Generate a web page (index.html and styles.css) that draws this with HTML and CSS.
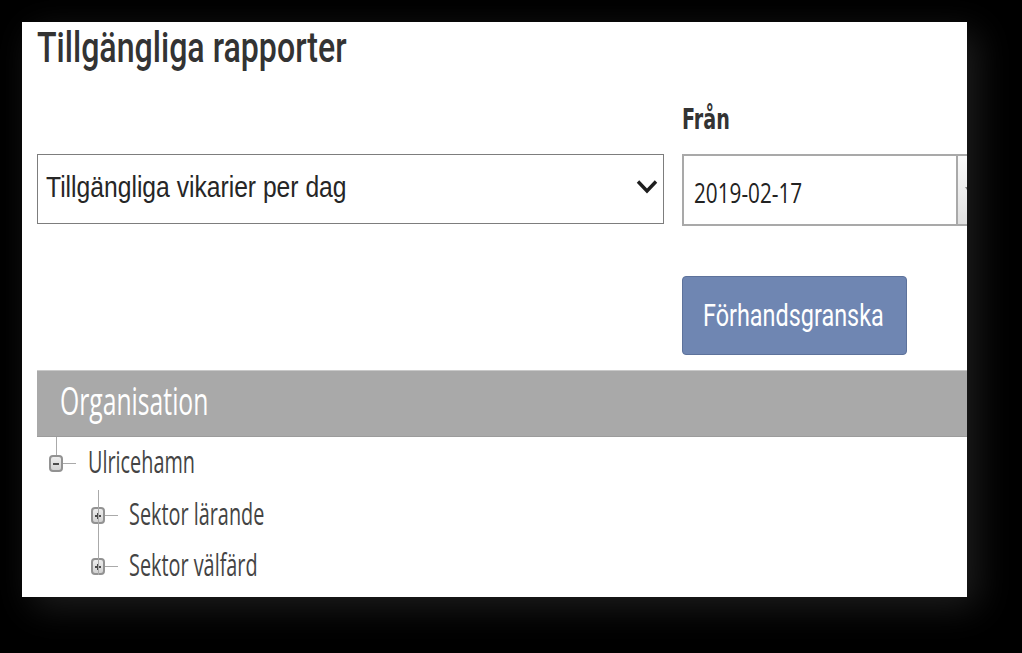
FILE: index.html
```html
<!DOCTYPE html>
<html lang="sv">
<head>
<meta charset="utf-8">
<title>Tillgängliga rapporter</title>
<link rel="stylesheet" href="styles.css">
</head>
<body>
<div class="card">
  <h1 class="title"><span class="sq sq-title">Tillgängliga rapporter</span></h1>
  <div class="form">
    <div class="cell"></div>
    <label class="label"><span class="sq sq-label">Från</span></label>
    <div class="select">
      <span class="sq sq-select">Tillgängliga vikarier per dag</span>
      <svg class="chev" width="22" height="15" viewBox="0 0 22 15"><path d="M2 2.5 L11 12 L20 2.5" fill="none" stroke="#1e1e1e" stroke-width="3.4"/></svg>
    </div>
    <div class="date">
      <div class="date-field"><span class="sq sq-date">2019-02-17</span></div>
      <div class="date-btn"><svg class="arrow" width="8" height="6" viewBox="0 0 8 6"><path d="M0 0 H8 L4 6 Z" fill="#888"/></svg></div>
    </div>
    <div class="cell"></div>
    <div class="cell"><button class="btn"><span class="sq sq-btn">Förhandsgranska</span></button></div>
  </div>
  <div class="bar"><span class="sq sq-bar">Organisation</span></div>
  <div class="tree">
    <div class="stub"></div>
    <div class="row root-row">
      <svg class="toggle" width="14" height="17" viewBox="0 0 14 17"><defs><linearGradient id="g1" x1="0" y1="0" x2="0" y2="1"><stop offset="0" stop-color="#efefef"/><stop offset="1" stop-color="#cfcfcf"/></linearGradient></defs><rect x="1" y="1" width="12" height="15" rx="3" fill="url(#g1)" stroke="#929292" stroke-width="2"/><rect class="sign" x="4" y="8" width="6" height="2" fill="#4a4a4a"/></svg>
      <span class="hline"></span>
      <span class="sq sq-tree">Ulricehamn</span>
    </div>
    <div class="children">
      <div class="child">
        <div class="row">
          <svg class="toggle" width="14" height="17" viewBox="0 0 14 17"><rect x="1" y="1" width="12" height="15" rx="3" fill="url(#g1)" stroke="#929292" stroke-width="2"/><rect class="sign" x="4" y="8" width="6" height="2" fill="#4a4a4a"/><rect class="sign" x="6" y="6" width="2" height="6" fill="#4a4a4a"/></svg>
          <span class="hline"></span>
          <span class="sq sq-tree">Sektor lärande</span>
        </div>
      </div>
      <div class="child">
        <div class="row">
          <svg class="toggle" width="14" height="17" viewBox="0 0 14 17"><rect x="1" y="1" width="12" height="15" rx="3" fill="url(#g1)" stroke="#929292" stroke-width="2"/><rect class="sign" x="4" y="8" width="6" height="2" fill="#4a4a4a"/><rect class="sign" x="6" y="6" width="2" height="6" fill="#4a4a4a"/></svg>
          <span class="hline"></span>
          <span class="sq sq-tree">Sektor välfärd</span>
        </div>
      </div>
    </div>
  </div>
</div>
</body>
</html>
```

FILE: styles.css
```css
html, body {
  margin: 0;
  padding: 0;
  background: #000;
}
body {
  width: 1022px;
  height: 653px;
  overflow: hidden;
  font-family: "Open Sans", "Liberation Sans", sans-serif;
}
.card {
  box-sizing: border-box;
  width: 945px;
  height: 575px;
  margin: 22px 0 0 22px;
  padding: 1px 0 0 15px;
  background: #fff;
  overflow: hidden;
  box-shadow: 10px 10px 34px #1e1e1e;
}
.sq {
  display: inline-block;
  white-space: nowrap;
  transform-origin: 0 50%;
}
.title {
  margin: 0;
  font-family: Roboto, sans-serif;
  font-weight: 500;
  font-size: 42px;
  line-height: 50px;
  height: 50px;
  color: #333;
}
.sq-title { transform: scaleX(0.765); }

.form {
  display: grid;
  grid-template-columns: 627px 330px;
  column-gap: 18px;
  margin-top: 29px;
}
.label {
  display: block;
  font-family: "DejaVu Sans", sans-serif;
  font-weight: 700;
  font-size: 29px;
  line-height: 34px;
  height: 34px;
  color: #333;
}
.sq-label { transform: scaleX(0.66); }

.select {
  box-sizing: border-box;
  margin-top: 18px;
  height: 70px;
  border: 1px solid #7d7d7d;
  display: flex;
  align-items: center;
  justify-content: space-between;
  padding: 0 5px 0 8px;
  font-family: "Liberation Sans", Arial, sans-serif;
  font-size: 29px;
  color: #262626;
}
.sq-select { transform: scaleX(0.85); margin-top: -4px; }
.chev { display: block; margin-top: -6px; }

.date {
  box-sizing: border-box;
  margin-top: 18px;
  height: 72px;
  display: flex;
  border: 2px solid #a9a9a9;
}
.date-field {
  box-sizing: border-box;
  width: 272px;
  flex: none;
  display: flex;
  align-items: center;
  padding-left: 10px;
  font-size: 28px;
  color: #222;
}
.sq-date { transform: scaleX(0.74); margin-top: 4px; }
.date-btn {
  flex: 1;
  border-left: 2px solid #a9a9a9;
  background: linear-gradient(#fafafa, #e0e0e0);
  display: flex;
  align-items: center;
  padding-left: 7px;
}
.arrow { display: block; }

.btn {
  box-sizing: border-box;
  margin-top: 50px;
  width: 225px;
  height: 79px;
  padding: 0 0 0 20px;
  text-align: left;
  background: #6f86b2;
  border: 1px solid #5d729b;
  border-radius: 4px;
  color: #fff;
  font-family: Roboto, sans-serif;
  font-size: 31px;
}
.sq-btn { transform: scaleX(0.755); margin-top: -3px; }

.bar {
  box-sizing: border-box;
  margin-top: 15px;
  height: 67px;
  background: #a9a9a9;
  border-top: 1px solid #c9c9c9;
  border-bottom: 1px solid #9c9c9c;
  display: flex;
  align-items: center;
  padding: 0 0 8px 23px;
  color: #fff;
  font-size: 38px;
}
.sq-bar { transform: scaleX(0.65); }

.tree {
  color: #444;
  font-size: 31px;
}
.stub {
  width: 1px;
  height: 18px;
  margin-left: 19px;
  background: #aaa;
}
.row {
  display: flex;
  align-items: center;
  height: 17px;
}
.root-row { margin-left: 12px; }
.toggle { display: block; flex: none; }
.sign { shape-rendering: crispEdges; }
.hline {
  width: 13px;
  height: 1px;
  background: #aaa;
  flex: none;
}
.root-row .hline { margin-right: 12px; }
.sq-tree { transform: scaleX(0.64); line-height: 16px; padding-bottom: 6px; }
.children {
  margin-left: 54px;
  margin-top: 18px;
}
.child {
  position: relative;
  padding-top: 17px;
}
.child + .child { padding-top: 34px; }
.child::before {
  content: "";
  position: absolute;
  left: 7px;
  top: 0;
  width: 1px;
  height: 100%;
  background: #aaa;
}
.child .hline { margin-right: 11px; }
```
